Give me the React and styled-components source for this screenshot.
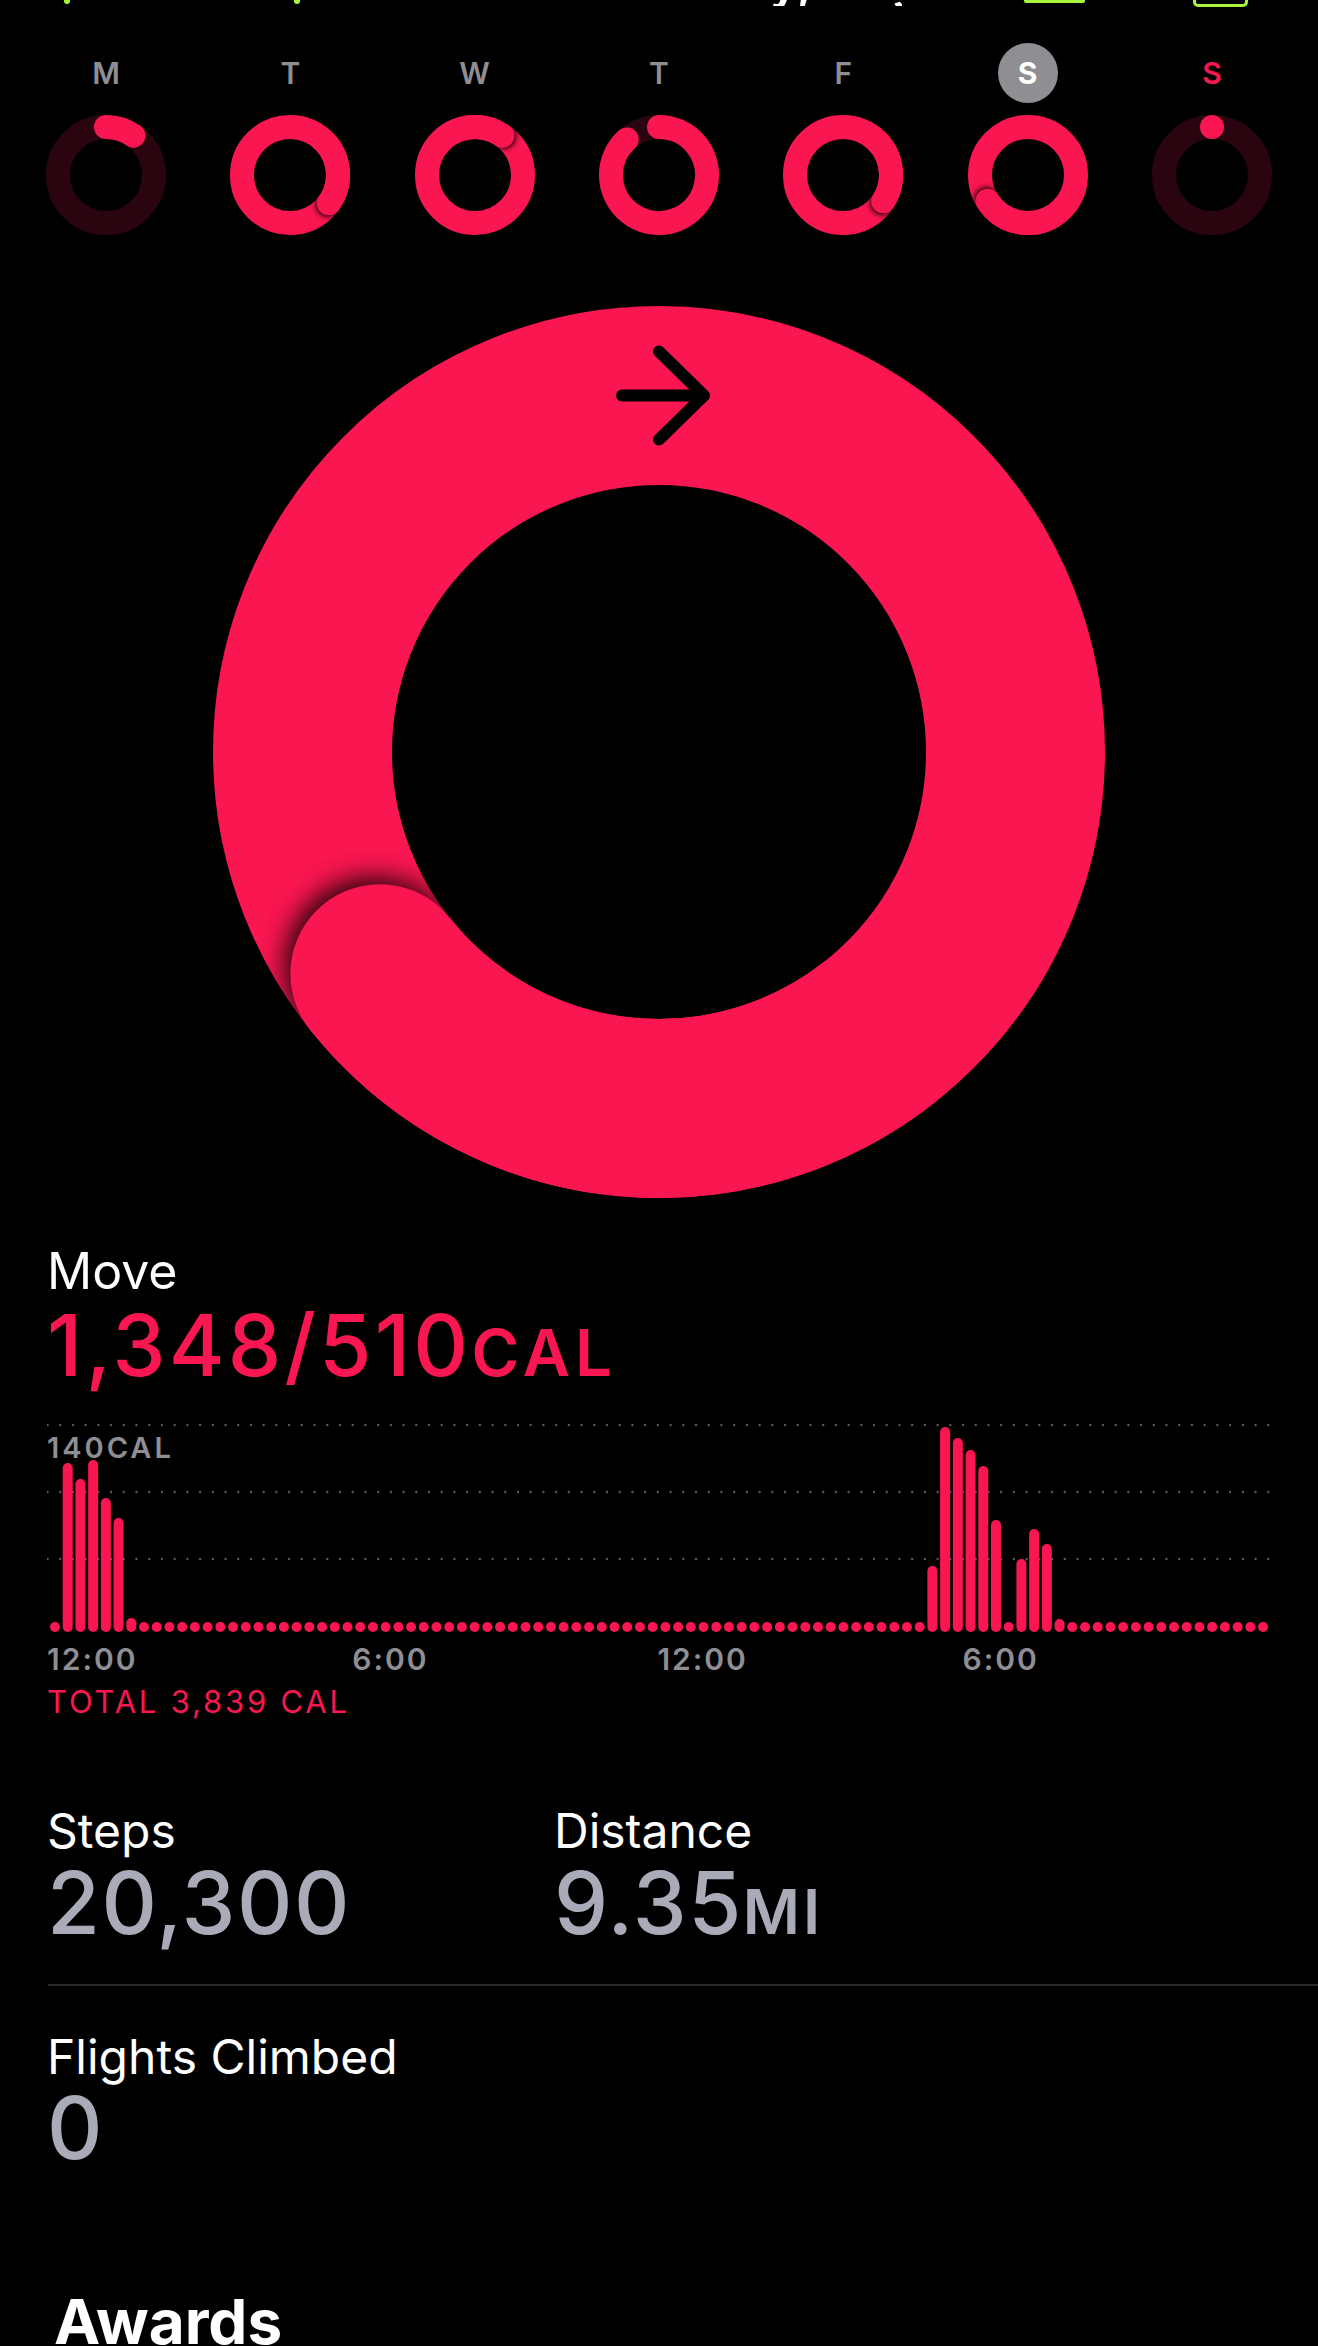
import React, { useId } from "react";
import styled, { createGlobalStyle } from "styled-components";

const PINK = "#fa1650";
const TRACK = "#2a0510";
const GRAY = "#8e8e93";
const STAT = "#a9acb8";
const LIME = "#a6f53c";

const GlobalStyle = createGlobalStyle`
  html, body { margin: 0; padding: 0; background: #000; }
  body { font-family: Inter, "Liberation Sans", sans-serif; color: #fff; }
`;

const Page = styled.div`
  width: 1318px;
  min-height: 2346px;
  background: #000;
  overflow: hidden;
`;

/* ---------- cut-off status strip ---------- */
const TopStrip = styled.div`
  height: 8px;
  display: flex;
  align-items: flex-start;
  overflow: hidden;
`;
const StripMark = styled.div`
  margin-left: ${(p) => p.$ml}px;
  width: ${(p) => p.$w}px;
  height: ${(p) => p.$h}px;
  background: ${(p) => (p.$outline ? "transparent" : LIME)};
  border: ${(p) => (p.$outline ? `3px solid ${LIME}` : "none")};
  border-top: none;
  border-radius: 0 0 ${(p) => p.$r}px ${(p) => p.$r}px;
  box-sizing: border-box;
  flex: none;
`;
const StripText = styled.div`
  margin-left: ${(p) => p.$ml}px;
  width: ${(p) => p.$w}px;
  margin-top: -44px;
  font-size: 50px;
  line-height: 50px;
  font-weight: 600;
  color: #fff;
  white-space: nowrap;
  overflow: hidden;
  flex: none;
`;

/* ---------- week ---------- */
const WeekRow = styled.div`
  display: flex;
  justify-content: space-between;
  padding: 0 46px;
  margin-top: ${(p) => p.$mt}px;
`;
const DayCell = styled.div`
  width: 120px;
  height: ${(p) => p.$h}px;
  display: flex;
  align-items: center;
  justify-content: center;
`;
const DayLetter = styled.div`
  width: 60px;
  height: 60px;
  border-radius: 50%;
  display: flex;
  align-items: center;
  justify-content: center;
  font-size: 30px;
  line-height: 1;
  font-weight: ${(p) => (p.$selected ? 700 : 600)};
  color: ${(p) => (p.$selected ? "#fff" : p.$today ? PINK : GRAY)};
  background: ${(p) => (p.$selected ? GRAY : "transparent")};
`;

const BigRingWrap = styled.div`
  display: flex;
  justify-content: center;
  margin-top: 71px;
`;

/* ---------- content ---------- */
const Content = styled.div`
  padding-left: 47px;
`;
const Label = styled.div`
  margin-top: ${(p) => p.$mt || 0}px;
  font-size: ${(p) => p.$size || 48}px;
  line-height: 1;
  font-weight: 400;
  color: #fff;
`;
const Value = styled.div`
  margin-top: ${(p) => p.$mt || 0}px;
  font-size: ${(p) => p.$size || 86}px;
  line-height: 1;
  font-weight: 500;
  letter-spacing: ${(p) => p.$track ?? 1.5}px;
  color: ${(p) => p.$color || STAT};
  white-space: nowrap;
`;
const Unit = styled.span`
  font-size: ${(p) => p.$size || 62}px;
  font-weight: 600;
  letter-spacing: ${(p) => p.$track ?? 3}px;
`;

const ChartBox = styled.div`
  position: relative;
  margin-top: 32px;
  width: 1224px;
  height: 215px;
`;
const ChartSvg = styled.svg`
  display: block;
`;
const ChartMax = styled.div`
  position: absolute;
  left: 0;
  top: 13px;
  font-size: 29px;
  line-height: 1;
  font-weight: 600;
  letter-spacing: 3px;
  color: ${GRAY};
`;
const TimeAxis = styled.div`
  display: flex;
  margin-top: 9px;
`;
const TimeTick = styled.div`
  width: 305.2px;
  font-size: 30px;
  line-height: 1;
  font-weight: 600;
  letter-spacing: 2px;
  color: ${GRAY};
`;
const Total = styled.div`
  margin-top: 12px;
  font-size: 31px;
  line-height: 1;
  font-weight: 400;
  letter-spacing: 2.8px;
  color: ${PINK};
`;

const StatGrid = styled.div`
  display: grid;
  grid-template-columns: 507px 1fr;
  margin-top: 89.5px;
`;
const Stat = styled.div``;

const Divider = styled.div`
  height: 2px;
  background: #2a2a2c;
  margin-top: 38px;
  margin-left: 1px;
`;

const SectionTitle = styled.div`
  margin-top: 120px;
  margin-left: 7px;
  font-size: 62px;
  line-height: 1;
  font-weight: 700;
  color: #fff;
`;

/* ---------- ring ---------- */
function ActivityRing({ size, stroke, progress, blur, offset, children }) {
  const id = useId().replace(/:/g, "");
  const c = size / 2;
  const r = (size - stroke) / 2;
  const pt = (deg) => {
    const a = (deg * Math.PI) / 180;
    return [c + r * Math.sin(a), c - r * Math.cos(a)];
  };
  const arc = (a0, a1) => {
    const [x0, y0] = pt(a0);
    const [x1, y1] = pt(a1);
    const large = a1 - a0 > 180 ? 1 : 0;
    return `M ${x0} ${y0} A ${r} ${r} 0 ${large} 1 ${x1} ${y1}`;
  };
  let body;
  if (progress >= 1) {
    const end = (progress * 360) % 360;
    const [ex, ey] = pt(end);
    const a = (end * Math.PI) / 180;
    const tx = Math.cos(a);
    const ty = Math.sin(a);
    body = (
      <>
        <circle cx={c} cy={c} r={r} fill="none" stroke={PINK} strokeWidth={stroke} />
        <circle
          cx={ex + tx * offset}
          cy={ey + ty * offset}
          r={stroke / 2}
          fill="#000"
          opacity="0.85"
          filter={`url(#sh${id})`}
        />
        <path d={arc(end - 90, end)} fill="none" stroke={PINK} strokeWidth={stroke} strokeLinecap="butt" />
        <circle cx={ex} cy={ey} r={stroke / 2} fill={PINK} />
      </>
    );
  } else if (progress > 0) {
    body = (
      <>
        <circle cx={c} cy={c} r={r} fill="none" stroke={TRACK} strokeWidth={stroke} />
        <path d={arc(0, progress * 360)} fill="none" stroke={PINK} strokeWidth={stroke} strokeLinecap="round" />
      </>
    );
  } else {
    const [x, y] = pt(0);
    body = (
      <>
        <circle cx={c} cy={c} r={r} fill="none" stroke={TRACK} strokeWidth={stroke} />
        <circle cx={x} cy={y} r={stroke / 2} fill={PINK} />
      </>
    );
  }
  return (
    <svg width={size} height={size} viewBox={`0 0 ${size} ${size}`} style={{ display: "block" }}>
      <defs>
        <filter id={`sh${id}`} x="-60%" y="-60%" width="220%" height="220%">
          <feGaussianBlur stdDeviation={blur} />
        </filter>
      </defs>
      {body}
      {children}
    </svg>
  );
}

const days = [
  { d: "M", p: 0.097 },
  { d: "T", p: 1.35 },
  { d: "W", p: 1.097 },
  { d: "T", p: 0.883 },
  { d: "F", p: 1.342 },
  { d: "S", p: 1.66, selected: true },
  { d: "S", p: 0, today: true },
];

const barHeights = (() => {
  const h = new Array(96).fill(10);
  Object.assign(h, {
    1: 169, 2: 153, 3: 172, 4: 134, 5: 114, 6: 14,
    69: 66, 70: 205, 71: 194, 72: 182, 73: 166, 74: 112,
    76: 73, 77: 103, 78: 88, 79: 13,
  });
  return h;
})();

const PITCH = 12.716;

function MoveChart() {
  return (
    <ChartBox>
      <ChartSvg width="1224" height="215" viewBox="0 0 1224 215">
        {[5, 72, 139].map((y) => (
          <line
            key={y}
            x1="0.5"
            x2="1222"
            y1={y}
            y2={y}
            stroke="#5a5a5e"
            strokeWidth="2.4"
            strokeLinecap="round"
            strokeDasharray={`0 ${PITCH}`}
          />
        ))}
        {barHeights.map((h, i) => (
          <rect
            key={i}
            x={8 + i * PITCH - 5}
            y={212 - h}
            width="10"
            height={h}
            rx="5"
            fill={PINK}
          />
        ))}
      </ChartSvg>
      <ChartMax>140CAL</ChartMax>
    </ChartBox>
  );
}

export default function App() {
  return (
    <Page>
      <GlobalStyle />
      <TopStrip>
        <StripMark $ml={64} $w={6} $h={4} $r={3} />
        <StripMark $ml={224} $w={6} $h={4} $r={3} />
        <StripText $ml={282} $w={320}>Saturday, Aug 8, 2020</StripText>
        <StripMark $ml={122} $w={61} $h={3} $r={2} />
        <StripMark $ml={108} $w={55} $h={7} $r={5} $outline />
      </TopStrip>

      <WeekRow $mt={35}>
        {days.map((x, i) => (
          <DayCell key={i} $h={60}>
            <DayLetter $selected={x.selected} $today={x.today}>
              {x.d}
            </DayLetter>
          </DayCell>
        ))}
      </WeekRow>
      <WeekRow $mt={12}>
        {days.map((x, i) => (
          <DayCell key={i} $h={120}>
            <ActivityRing size={120} stroke={24} progress={x.p} blur={2.5} offset={2} />
          </DayCell>
        ))}
      </WeekRow>

      <BigRingWrap>
        <ActivityRing size={892} stroke={179} progress={1348 / 510} blur={13} offset={9}>
          <path
            d="M 409 89.5 L 491 89.5 M 446 45.5 L 491 89.5 L 446 133.5"
            fill="none"
            stroke="#000"
            strokeWidth="12"
            strokeLinecap="round"
            strokeLinejoin="round"
          />
        </ActivityRing>
      </BigRingWrap>

      <Content>
        <Label $mt={48} $size={50}>Move</Label>
        <Value $mt={7} $size={85} $track={3.2} $color={PINK}>
          1,348/510<Unit $size={65} $track={5}>CAL</Unit>
        </Value>

        <MoveChart />
        <TimeAxis>
          <TimeTick>12:00</TimeTick>
          <TimeTick>6:00</TimeTick>
          <TimeTick>12:00</TimeTick>
          <TimeTick>6:00</TimeTick>
        </TimeAxis>
        <Total>TOTAL 3,839 CAL</Total>

        <StatGrid>
          <Stat>
            <Label>Steps</Label>
            <Value $mt={5.5}>20,300</Value>
          </Stat>
          <Stat>
            <Label>Distance</Label>
            <Value $mt={5.5}>
              9.35<Unit>MI</Unit>
            </Value>
          </Stat>
        </StatGrid>
        <Divider />
        <Label $mt={47}>Flights Climbed</Label>
        <Value $mt={4}>0</Value>

        <SectionTitle>Awards</SectionTitle>
      </Content>
    </Page>
  );
}
